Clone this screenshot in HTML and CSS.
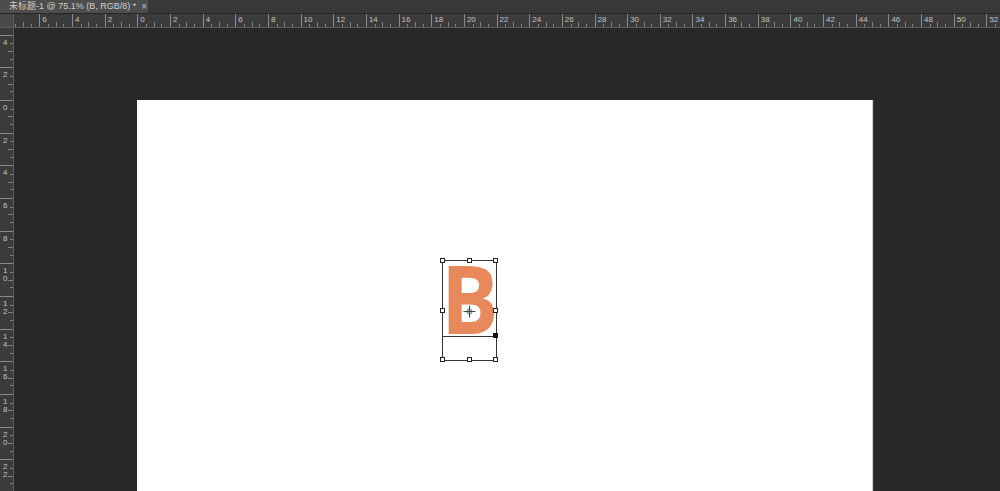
FILE: index.html
```html
<!DOCTYPE html>
<html lang="zh-CN">
<head>
  <meta charset="UTF-8" />
  <meta name="viewport" content="width=device-width, initial-scale=1.0" />
  <title>未标题-1</title>
  <link rel="stylesheet" href="styles.css">
</head>
<body>

  <!-- document tab -->
  <div class="tabbar">
    <div class="tab">
      <span class="tab-title">未标题-1 @ 75.1% (B, RGB/8) *</span>
      <span class="tab-close">×</span>
    </div>
  </div>

  <!-- top ruler -->
  <div class="ruler-row">
    <div class="ruler-corner"></div>
    <div class="hruler">
      <div class="hticks">
        <div class="hcell"></div>
        <div class="hcell">6</div>
        <div class="hcell">4</div>
        <div class="hcell">2</div>
        <div class="hcell">0</div>
        <div class="hcell">2</div>
        <div class="hcell">4</div>
        <div class="hcell">6</div>
        <div class="hcell">8</div>
        <div class="hcell">10</div>
        <div class="hcell">12</div>
        <div class="hcell">14</div>
        <div class="hcell">16</div>
        <div class="hcell">18</div>
        <div class="hcell">20</div>
        <div class="hcell">22</div>
        <div class="hcell">24</div>
        <div class="hcell">26</div>
        <div class="hcell">28</div>
        <div class="hcell">30</div>
        <div class="hcell">32</div>
        <div class="hcell">34</div>
        <div class="hcell">36</div>
        <div class="hcell">38</div>
        <div class="hcell">40</div>
        <div class="hcell">42</div>
        <div class="hcell">44</div>
        <div class="hcell">46</div>
        <div class="hcell">48</div>
        <div class="hcell">50</div>
        <div class="hcell">52</div>
        <div class="hcell"></div>
      </div>
    </div>
  </div>

  <div class="workspace">
    <!-- left ruler -->
    <div class="vruler">
      <div class="vticks">
        <div class="vcell"></div>
        <div class="vcell"><span>4</span></div>
        <div class="vcell"><span>2</span></div>
        <div class="vcell"><span>0</span></div>
        <div class="vcell"><span>2</span></div>
        <div class="vcell"><span>4</span></div>
        <div class="vcell"><span>6</span></div>
        <div class="vcell"><span>8</span></div>
        <div class="vcell"><span>1</span><span>0</span></div>
        <div class="vcell"><span>1</span><span>2</span></div>
        <div class="vcell"><span>1</span><span>4</span></div>
        <div class="vcell"><span>1</span><span>6</span></div>
        <div class="vcell"><span>1</span><span>8</span></div>
        <div class="vcell"><span>2</span><span>0</span></div>
        <div class="vcell"><span>2</span><span>2</span></div>
        <div class="vcell"></div>
      </div>
    </div>

    <!-- canvas -->
    <div class="pasteboard">
      <div class="document">
        <div class="text-layer">B</div>
        <div class="transform-box">
          <div class="baseline"></div>
          <span class="handle h-tl"></span>
          <span class="handle h-tc"></span>
          <span class="handle h-tr"></span>
          <span class="handle h-ml"></span>
          <span class="handle h-mr"></span>
          <span class="handle h-bl"></span>
          <span class="handle h-bc"></span>
          <span class="handle h-br"></span>
          <span class="anchor"></span>
          <svg class="pivot" width="13" height="13" viewBox="0 0 13 13">
            <circle cx="6.5" cy="6.5" r="2.6" fill="#cfe0f0" stroke="#666" stroke-width="0.8"/>
            <path d="M6.5 0.5 V12.5 M0.5 6.5 H12.5" stroke="#333" stroke-width="0.9"/>
          </svg>
        </div>
      </div>
    </div>
  </div>

</body>
</html>
```

FILE: styles.css
```css
body {
  margin: 0;
  background: #282828;
  font-family: 'Liberation Sans', 'Noto Sans CJK SC', sans-serif;
  height: 100vh;
  overflow: hidden;
  display: flex;
  flex-direction: column;
}

/* tab bar */

.tabbar {
  height: 13px;
  background: #383838;
  border-bottom: 1px solid #262626;
  display: flex;
}

.tab {
  width: 148px;
  background: #4d4d4d;
  color: #d0d0d0;
  font-size: 9px;
  line-height: 13px;
  display: flex;
  align-items: center;
  padding-left: 9px;
  box-sizing: border-box;
  white-space: nowrap;
}

.tab-close {
  margin-left: 5px;
  font-size: 10px;
  color: #bdbdbd;
}

/* rulers */

.ruler-row {
  height: 13px;
  display: flex;
  border-bottom: 1px solid #5a5a5a;
}

.ruler-corner {
  width: 13px;
  background: #4a4a4a;
  border-right: 1px solid #5a5a5a;
}

.hruler {
  flex: 1;
  background: #3b3b3b;
  overflow: hidden;
}

.hticks {
  display: flex;
  margin-left: -7.3px;
  height: 100%;
}

.hcell {
  flex: 0 0 32.667px;
  box-sizing: border-box;
  border-left: 1px solid #8a8a8a;
  padding: 1px 0 0 2px;
  font-size: 8px;
  line-height: 10px;
  color: #c4c4c4;
  background:
    linear-gradient(#808080, #808080) 25% 100% / 1px 3px no-repeat,
    linear-gradient(#808080, #808080) 50% 100% / 1px 5px no-repeat,
    linear-gradient(#808080, #808080) 75% 100% / 1px 3px no-repeat;
}

.workspace {
  flex: 1;
  display: flex;
  min-height: 0;
}

.vruler {
  width: 13px;
  background: #3b3b3b;
  border-right: 1px solid #5a5a5a;
  overflow: hidden;
}

.vticks {
  margin-top: -26px;
}

.vcell {
  height: 32.667px;
  box-sizing: border-box;
  border-top: 1px solid #8a8a8a;
  padding: 3px 0 0 3px;
  display: flex;
  flex-direction: column;
  font-size: 8px;
  line-height: 8px;
  color: #c4c4c4;
  background:
    linear-gradient(#808080, #808080) 100% 25% / 3px 1px no-repeat,
    linear-gradient(#808080, #808080) 100% 50% / 5px 1px no-repeat,
    linear-gradient(#808080, #808080) 100% 75% / 3px 1px no-repeat;
}

/* canvas */

.pasteboard {
  flex: 1;
  padding: 72px 0 0 123px;
}

.document {
  width: 735px;
  height: 100%;
  background: #fff;
  position: relative;
  box-shadow: 1px 0 0 #cfcfcf, 2px 0 0 #3a3a3a;
}

.text-layer {
  position: absolute;
  left: 304px;
  top: 150px;
  font-family: 'Open Sans', sans-serif;
  font-weight: bold;
  font-size: 95px;
  line-height: 95px;
  color: #e8895b;
  transform: scaleX(0.9);
  transform-origin: left top;
}

.transform-box {
  position: absolute;
  left: 305px;
  top: 160px;
  width: 55px;
  height: 101px;
  border: 1px solid #333;
  box-sizing: border-box;
}

.baseline {
  position: absolute;
  left: 0;
  right: 0;
  top: 75px;
  border-top: 1px solid #333;
}

.handle {
  position: absolute;
  width: 5px;
  height: 5px;
  background: #fff;
  border: 1px solid #222;
  box-sizing: border-box;
  margin: -3px 0 0 -3px;
}

.h-tl { left: 0; top: 0; }
.h-tc { left: 50%; top: 0; }
.h-tr { left: 100%; top: 0; }
.h-ml { left: 0; top: 50%; }
.h-mr { left: 100%; top: 50%; }
.h-bl { left: 0; top: 100%; }
.h-bc { left: 50%; top: 100%; }
.h-br { left: 100%; top: 100%; }

.anchor {
  position: absolute;
  left: 100%;
  top: 75px;
  width: 5px;
  height: 5px;
  margin: -3px 0 0 -3px;
  background: #111;
}

.pivot {
  position: absolute;
  left: 20px;
  top: 44px;
}
```
